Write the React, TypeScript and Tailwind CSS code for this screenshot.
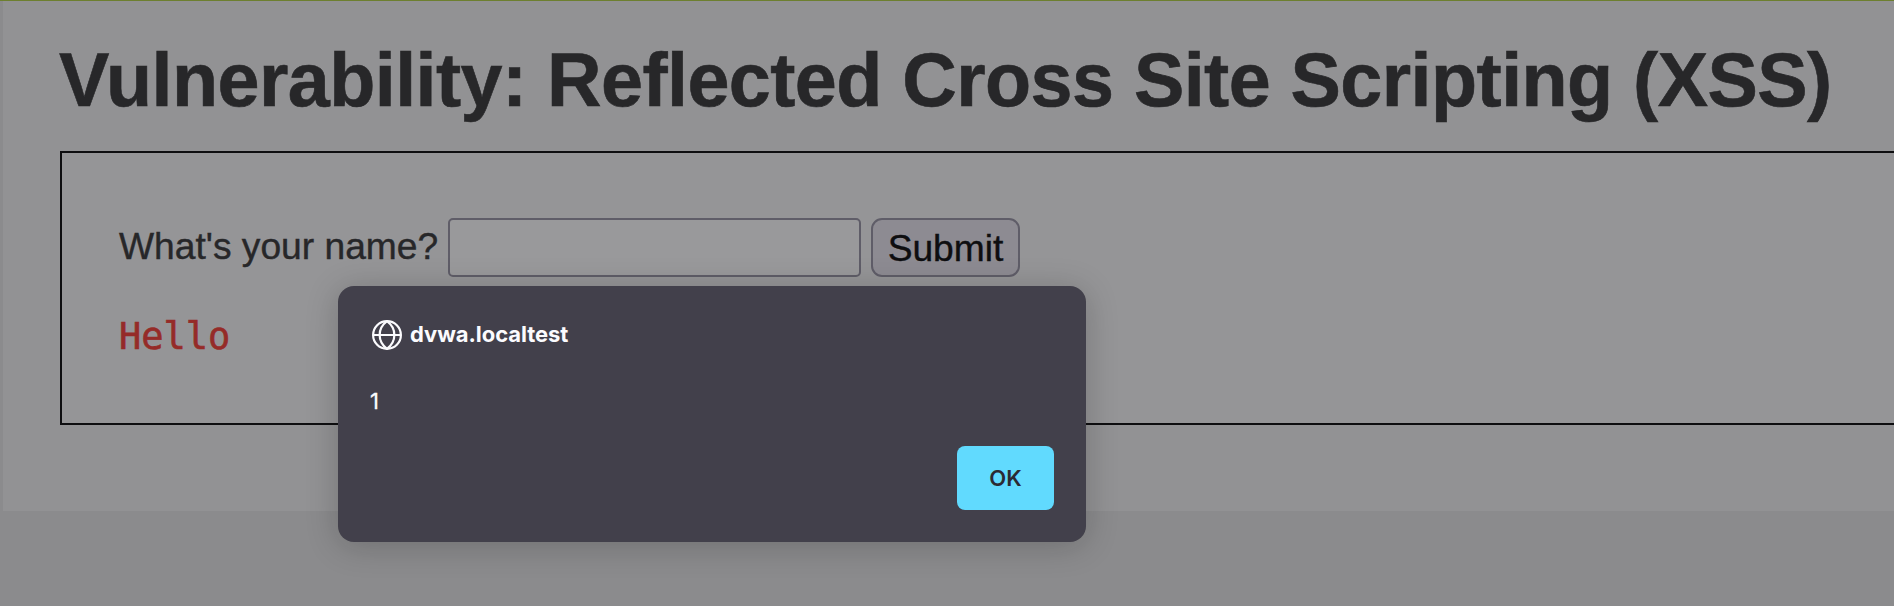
import React from "react";

function GlobeIcon() {
  return (
    <svg className="h-[30px] w-[30px] shrink-0" viewBox="0 0 30 30" fill="none" stroke="#fbfbfe" strokeWidth="2.2">
      <circle cx="15" cy="15" r="13.9" />
      <path d="M15 1.2C5.2 8.5 5.2 21.5 15 28.8C24.8 21.5 24.8 8.5 15 1.2Z" />
      <path d="M1 15h28" strokeWidth="2" />
    </svg>
  );
}

function AlertDialog() {
  return (
    <div
      role="dialog"
      className="absolute left-[338px] top-[285px] flex h-[256px] w-[748px] flex-col rounded-[16px] bg-[#42404b] px-8 pt-[34px] pb-8 font-[Inter,sans-serif] text-[22px] text-[#fbfbfe] shadow-[0_4px_32px_rgba(12,12,13,0.22)]"
    >
      <div className="flex h-[30px] items-center gap-[8px] pl-[2px]">
        <GlobeIcon />
        <span className="-mt-[3px] text-[22px] leading-[30px] font-bold tracking-[-0.05px]">dvwa.localtest</span>
      </div>
      <p className="mt-[36px] h-[30px] leading-[30px] [-webkit-text-stroke:0.3px_#fbfbfe]">1</p>
      <button className="mt-auto h-16 w-[97px] self-end rounded-lg bg-[#61dafe] font-semibold text-[#2b2a33]">OK</button>
    </div>
  );
}

export default function App() {
  return (
    <div className="relative h-[606px] w-full overflow-hidden border-t border-[#6d7f2f] bg-[#8b8b8d] pl-[3px] font-['Liberation_Sans',Arial,sans-serif] text-[#272729]">
      <main className="h-[510px] bg-[#929294] pt-[35px] pl-[57px]">
        <h1 className="-ml-px h-[115px] text-[75.5px] leading-[88px] font-bold tracking-[-0.56px] whitespace-nowrap [-webkit-text-stroke:0.6px_#272729]">
          Vulnerability: Reflected Cross Site Scripting (XSS)
        </h1>
        <section className="h-[274px] border-2 border-r-0 border-[#0e0e10] bg-[#959597] pt-[65px] pl-[57px]">
          <form className="flex h-[59px] items-start" onSubmit={(e) => e.preventDefault()}>
            <label
              htmlFor="name"
              className="w-[329px] pt-px text-[37.2px] leading-[54px] whitespace-nowrap [-webkit-text-stroke:0.4px_#272729]"
            >
              What&apos;s your name?
            </label>
            <input
              id="name"
              className="h-[59px] w-[413px] rounded-[5px] border-2 border-[#5f5d68] bg-[#99999b] px-2 text-[37px] outline-none"
            />
            <button className="ml-[10px] h-[59px] w-[149px] rounded-[11px] border-2 border-[#5f5d68] bg-[#8d8b92] pt-px text-[37.2px] leading-[54px] text-[#0e0e10] [-webkit-text-stroke:0.4px_#0e0e10]">
              Submit
            </button>
          </form>
          <pre className="mt-[38px] font-['DejaVu_Sans_Mono',monospace] text-[37px] leading-[44px] text-[#952b28] [-webkit-text-stroke:0.6px_#952b28]">
            Hello
          </pre>
        </section>
      </main>
      <AlertDialog />
    </div>
  );
}
